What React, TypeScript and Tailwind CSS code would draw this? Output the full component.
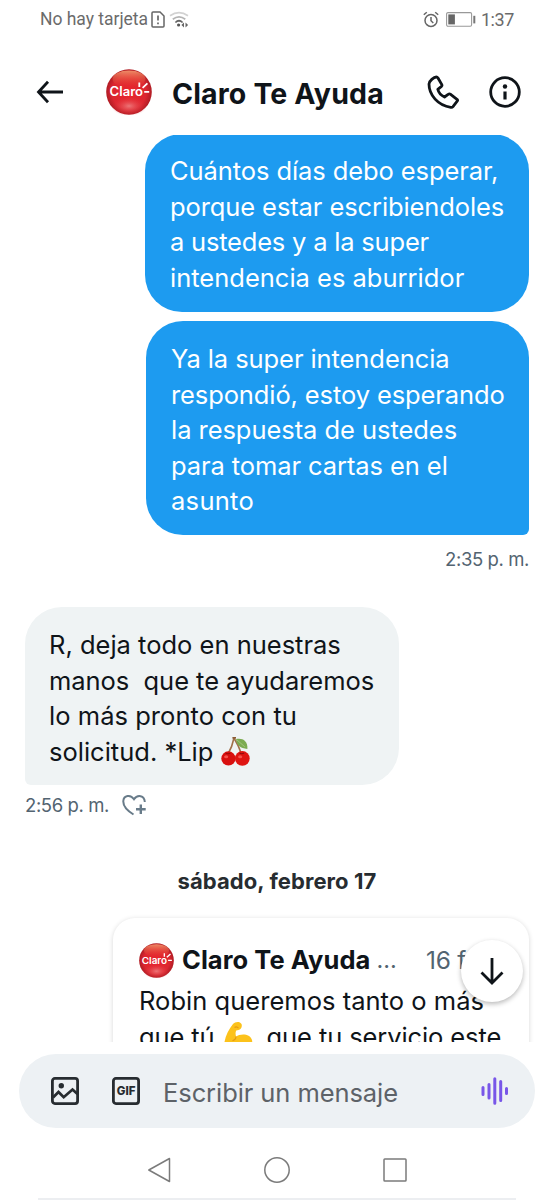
import React from "react";

type LineProps = { children: React.ReactNode; className?: string };

function Line({ children, className = "" }: LineProps) {
  return (
    <div className="h-[35.5px] leading-[35.5px]">
      <span className={"whitespace-pre " + className}>{children}</span>
    </div>
  );
}

function ClaroLogo({ className, id }: { className: string; id: string }) {
  return (
    <svg viewBox="0 0 46 46" className={className}>
      <defs>
        <radialGradient id={id + "-base"} cx="50%" cy="50%" r="50%">
          <stop offset="0" stopColor="#e8252d" />
          <stop offset="0.75" stopColor="#dc2630" />
          <stop offset="1" stopColor="#b01c24" />
        </radialGradient>
        <linearGradient id={id + "-top"} x1="0" y1="0" x2="0" y2="1">
          <stop offset="0" stopColor="#f59a70" stopOpacity="0.9" />
          <stop offset="1" stopColor="#e8452f" stopOpacity="0" />
        </linearGradient>
        <radialGradient id={id + "-glow"} cx="50%" cy="50%" r="50%">
          <stop offset="0" stopColor="#f08a8a" stopOpacity="0.8" />
          <stop offset="1" stopColor="#e8252d" stopOpacity="0" />
        </radialGradient>
      </defs>
      <circle cx="23" cy="23" r="22.8" fill={`url(#${id}-base)`} />
      <ellipse cx="23" cy="10" rx="16.5" ry="8.5" fill={`url(#${id}-top)`} />
      <ellipse cx="23" cy="37" rx="18" ry="10" fill={`url(#${id}-glow)`} />
      <text
        x="3.6"
        y="27.3"
        textLength="33.4"
        lengthAdjust="spacingAndGlyphs"
        fill="#fff"
        className="font-['Inter'] text-[12.5px] font-semibold"
      >
        Claro
      </text>
      <path d="M33.3 13.6v4.4M36.6 18.8l4.8-4.4M38.2 22.8h5" stroke="#fff" strokeWidth="1.8" fill="none" />
    </svg>
  );
}

function StatusBar() {
  return (
    <div className="flex h-[38px] items-center pl-[40px] pr-[40px] font-['Roboto',sans-serif] text-[17.5px] text-[#6b6b6b]">
      <span className="whitespace-nowrap tracking-[-0.02px]">No hay tarjeta</span>
      <svg viewBox="0 0 14 17" className="ml-[3px] h-[17px] w-[14px]" fill="none" stroke="#666">
        <path d="M2 1h7l4 4v10a1 1 0 0 1-1 1H2a1 1 0 0 1-1-1V2a1 1 0 0 1 1-1z" strokeWidth="1.5" />
        <path d="M7 4.5v5M7 11.5v1.8" strokeWidth="1.7" />
      </svg>
      <svg viewBox="0 0 20 17" className="ml-[4px] h-[17px] w-[20px]" fill="none">
        <path d="M1 4.8Q10-1.500 19 4.8" stroke="#d2d2d2" strokeWidth="1.7" />
        <path d="M3.8 8.200Q10 3.500 16.3 8.200" stroke="#b4b4b4" strokeWidth="1.7" />
        <path d="M6.4 11.500Q10 8 13.6 11.500" stroke="#666" strokeWidth="1.7" />
        <circle cx="9.6" cy="14" r="1.6" fill="#555" />
        <path d="M15 11.5v5l-2.6-2.5zM16.500 11.5v5l2.6-2.5z" fill="#666" />
      </svg>
      <div className="ml-auto flex items-center">
        <svg viewBox="0 0 16 17" className="h-[17px] w-[16px]" fill="none" stroke="#666" strokeWidth="1.5">
          <circle cx="8" cy="9.4" r="6" />
          <path d="M8 6v3.8l2.3 2.2M.8 3.8l3-2.6M15.2 3.8l-3-2.6" />
        </svg>
        <svg viewBox="0 0 30 15" className="ml-[7px] h-[15px] w-[30px]" fill="none">
          <rect x=".6" y=".6" width="25" height="13.6" rx="1.4" stroke="#999" strokeWidth="1.1" />
          <rect x="2.3" y="2.4" width="6.6" height="10" fill="#666" />
          <rect x="27.3" y="3.8" width="2" height="7.6" fill="#777" />
        </svg>
        <span className="ml-[5px] text-[18px] tracking-[-0.4px]">1:37</span>
      </div>
    </div>
  );
}

function Header() {
  return (
    <header className="flex h-[97px] items-center pl-[36px] pr-[33px] pt-[11px] text-[#0f1419]">
      <svg viewBox="0 0 28 24" className="h-[24px] w-[28px]" fill="none" stroke="currentColor" strokeWidth="2.8">
        <path d="M12 1.800 2.500 12 12 22.200M2 12h25" />
      </svg>
      <ClaroLogo id="head" className="ml-[42px] h-[46px] w-[46px]" />
      <h1 className="ml-[20px] whitespace-nowrap pt-[5px] text-[28.5px] font-bold tracking-[0.15px]">Claro Te Ayuda</h1>
      <svg viewBox="0 0 32 34" className="ml-auto h-[34px] w-[32px]" fill="none" stroke="currentColor" strokeWidth="2.8" strokeLinejoin="round">
        <path d="M2 9C2 6 7 2 9.300 2Q10.300 2 11 3L14.800 9.600Q15.300 10.500 14.500 11.300L10.800 14.300Q12 19.500 17.500 22L21.500 19.200Q22.400 18.500 23.300 19.200L30 24.300Q31 25.200 30.200 26.200L26 31.600Q25.200 32.500 23.800 32.300C11 30.500 2 20 2 9Z" />
      </svg>
      <svg viewBox="0 0 32 32" className="ml-[30px] h-[32px] w-[32px]" fill="none" stroke="currentColor" strokeWidth="2.8">
        <circle cx="16" cy="16" r="14.300" />
        <path d="M16 15.500v8" strokeWidth="3.200" />
        <circle cx="16" cy="10.500" r="2.200" fill="currentColor" stroke="none" />
      </svg>
    </header>
  );
}

function Cherries() {
  return (
    <svg viewBox="0 0 28 28" className="ml-[8px] inline-block h-[29px] w-[29px] align-[-5px]">
      <path d="M12.500 1Q11 9 6.500 17M12.500 1Q17 8 20 17" stroke="#a0704a" strokeWidth="1.600" fill="none" />
      <path d="M11 .8h3.500" stroke="#8a5c35" strokeWidth="1.600" />
      <path d="M14.500 2C20 .5 26 3 25.500 11.500 18.500 11 15 8 14.500 2Z" fill="#7cab51" />
      <path d="M15 2.500 23 9.500" stroke="#a9c981" strokeWidth=".8" />
      <circle cx="7.200" cy="20.700" r="6.900" fill="#d8100f" />
      <circle cx="20.600" cy="20.700" r="7.100" fill="#df1512" />
      <ellipse cx="5" cy="19" rx="2" ry="1.500" fill="#f5524c" />
      <ellipse cx="18.500" cy="19" rx="2" ry="1.500" fill="#f5524c" />
      <path d="M4.500 15.600q2.500 1.300 4.500 0M17.800 15.500q2.500 1.300 4.500 0" stroke="#8d0b0b" strokeWidth="1" fill="none" />
    </svg>
  );
}

function Biceps() {
  return (
    <svg viewBox="0 0 30 30" className="ml-[8px] mr-[14px] inline-block h-[30px] w-[30px] align-[-5px]">
      <path
        d="M10 3C12 .5 17 0 18.500 3c1 2.500-.5 5.500-3 6-1.500.5-2 0-2.500 1-.8 2-.3 4 0 5.500C17 12.500 27 12 29 19c1.500 6-4 10-11 10C11 29 4 29 1 26 1 18 5 9 10 3Z"
        fill="#fcc21b"
      />
      <path d="M13 15.500c0 2-1.200 3.500-3.500 4.300M11.500 6.500c1.500-1 3-.5 4 .7" stroke="#e59a12" strokeWidth="1.200" fill="none" />
    </svg>
  );
}

function QuotedCard() {
  return (
    <div className="ml-auto mt-[23px] h-[170px] w-[416px] shrink-0 rounded-[22px] bg-white pl-[26px] pr-[24px] pt-[24px] shadow-[0_1px_5px_rgba(0,0,0,0.16)]">
      <div className="flex h-[36px] items-center">
        <ClaroLogo id="card" className="h-[35px] w-[35px]" />
        <span className="ml-[8px] whitespace-nowrap text-[25.5px] font-bold tracking-[0.05px]">Claro Te Ayuda</span>
        <span className="ml-[6px] text-[23.5px] text-[#536471]">...</span>
        <span className="ml-auto mr-[11px] whitespace-nowrap text-[24.5px] tracking-[-0.3px] text-[#536471]">16 feb</span>
      </div>
      <div className="pt-[5px] text-[25.5px]">
        <Line className="tracking-[0.03px]">Robin queremos tanto o más</Line>
        <Line className="tracking-[-0.1px]">
          que tú
          <Biceps />
          que tu servicio este
        </Line>
      </div>
    </div>
  );
}

function Composer() {
  return (
    <div className="mx-[19px] mt-[12px] flex h-[74px] items-center rounded-full bg-[#edf1f4] pl-[32px] pr-[26px]">
      <svg viewBox="0 0 28 28" className="h-[28px] w-[28px]" fill="none" stroke="#272c30" strokeWidth="2.800">
        <rect x="1.400" y="1.400" width="25.200" height="25.200" rx="2.500" />
        <path d="m2 20.500 5.500-5.500 5.200 5.200L21.500 12.500l5 4.500" />
        <circle cx="10.300" cy="8.800" r="2.700" fill="#272c30" stroke="none" />
      </svg>
      <svg viewBox="0 0 28 28" className="ml-[33px] h-[28px] w-[28px]">
        <rect x="1.400" y="1.400" width="25.200" height="25.200" rx="2.500" fill="none" stroke="#272c30" strokeWidth="2.800" />
        <text x="4.800" y="18.200" textLength="18.800" fill="#272c30" className="font-['Inter'] text-[11.500px] font-extrabold">
          GIF
        </text>
      </svg>
      <span className="ml-[23px] whitespace-nowrap pt-[4px] text-[25.5px] tracking-[-0.08px] text-[#5d6268]">Escribir un mensaje</span>
      <svg viewBox="0 0 28 28" className="ml-auto h-[28px] w-[28px]" stroke="#7856e8" strokeWidth="3" strokeLinecap="round">
        <path d="M2 10.500v7M8 7.500v13.500M13.800 1.800v24.500M19.700 4.500v19M25.500 11.500v5" />
      </svg>
    </div>
  );
}

function NavBar() {
  return (
    <div className="flex grow items-center justify-center gap-[89.5px] pt-[14px]">
      <svg viewBox="0 0 28 28" className="h-[28px] w-[28px]" fill="none" stroke="#7b7b7b" strokeWidth="1.500" strokeLinejoin="round">
        <path d="M23.500 2.500v23L2.800 14z" />
      </svg>
      <svg viewBox="0 0 28 28" className="h-[28px] w-[28px]" fill="none" stroke="#7b7b7b" strokeWidth="1.500">
        <circle cx="14" cy="14" r="12.200" />
      </svg>
      <svg viewBox="0 0 28 28" className="h-[28px] w-[28px]" fill="none" stroke="#7b7b7b" strokeWidth="1.500">
        <rect x="3" y="3" width="22" height="22" rx=".8" />
      </svg>
    </div>
  );
}

export default function App() {
  return (
    <div className="flex h-[1200px] w-[554px] flex-col overflow-hidden bg-white font-['Inter','Liberation_Sans',sans-serif] text-[#0f1419]">
      <StatusBar />
      <Header />
      <main className="relative flex h-[907px] flex-col overflow-hidden px-[25px]">
        <div className="-mt-[1px] ml-auto h-[178px] w-[384px] shrink-0 rounded-[37px] bg-[#1d9bf0] pl-[25px] pt-[19px] text-[25.5px] text-white">
          <Line className="tracking-[-0.09px]">Cuántos días debo esperar,</Line>
          <Line className="tracking-[-0.1px]">porque estar escribiendoles</Line>
          <Line className="tracking-[-0.2px]">a ustedes y a la super</Line>
          <Line>intendencia es aburridor</Line>
        </div>
        <div className="ml-auto mt-[9px] h-[214px] w-[383px] shrink-0 rounded-[37px] rounded-br-[6px] bg-[#1d9bf0] pl-[25px] pt-[20px] text-[25.5px] text-white">
          <Line className="tracking-[-0.08px]">Ya la super intendencia</Line>
          <Line className="tracking-[-0.11px]">respondió, estoy esperando</Line>
          <Line className="tracking-[-0.05px]">la respuesta de ustedes</Line>
          <Line className="tracking-[-0.09px]">para tomar cartas en el</Line>
          <Line className="tracking-[0.3px]">asunto</Line>
        </div>
        <div className="mt-[12px] h-[24px] text-right text-[18.5px] leading-[24px] tracking-[-0.4px] text-[#536471]">2:35 p. m.</div>
        <div className="mt-[36px] h-[178px] w-[374px] shrink-0 rounded-[37px] rounded-bl-[6px] bg-[#eff3f4] pl-[24px] pt-[20px] text-[25.5px]">
          <Line>R, deja todo en nuestras</Line>
          <Line className="tracking-[-0.04px]">{"manos  que te ayudaremos"}</Line>
          <Line className="tracking-[0.04px]">lo más pronto con tu</Line>
          <Line>
            solicitud. *Lip
            <Cherries />
          </Line>
        </div>
        <div className="mt-[9px] flex h-[24px] items-center text-[18.5px] tracking-[-0.4px] text-[#536471]">
          <span>2:56 p. m.</span>
          <svg viewBox="0 0 24 22" className="ml-[13px] h-[22px] w-[24px] -translate-y-px" fill="none" stroke="#687b89" strokeWidth="2">
            <path d="M11.500 20.500C5 16.500 1 12 1.300 7 1.800 1.300 8.500 0 12 5.300 15.500 0 22.500 1.300 22.800 8" />
            <path d="M18.800 10.500v9.500M14 15.300h9.700" strokeWidth="2.400" />
          </svg>
        </div>
        <div className="mt-[49px] h-[28px] text-center text-[22px] font-bold leading-[28px] tracking-[0.08px] text-[#272c30]">sábado, febrero 17</div>
        <QuotedCard />
        <div className="absolute right-[31px] top-[805px] flex size-[62px] items-center justify-center rounded-full bg-white shadow-[0_2px_5px_rgba(0,0,0,0.28)]">
          <svg viewBox="0 0 24 28" className="h-[28px] w-[24px]" fill="none" stroke="#0f1419" strokeWidth="2.800">
            <path d="M12 1v25M1.500 15.500 12 26l10.500-10.500" />
          </svg>
        </div>
      </main>
      <Composer />
      <NavBar />
      <div className="mx-[38px] h-[2px] shrink-0 bg-[#eceef1]" />
    </div>
  );
}
